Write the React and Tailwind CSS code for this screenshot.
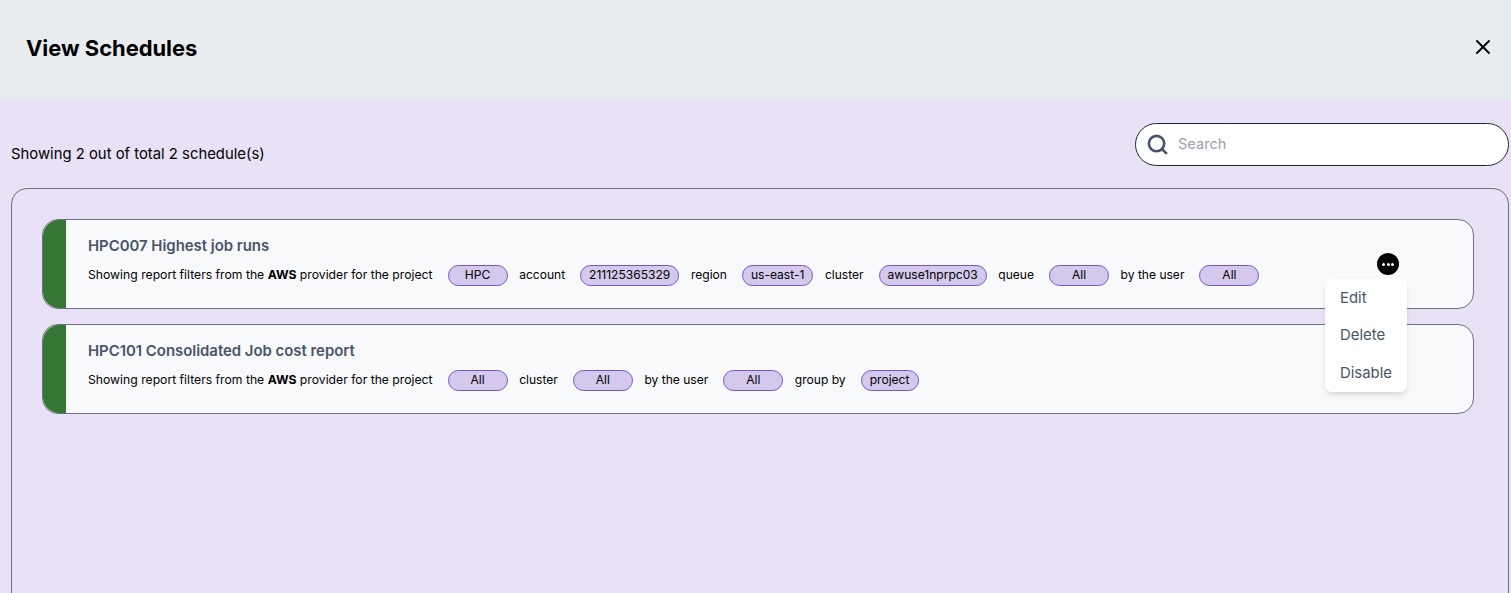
import { Search, X } from 'lucide-react'

const schedules = [
  {
    id: 'a',
    title: 'HPC007 Highest job runs',
    parts: [
      ['HPC', 'account'],
      ['211125365329', 'region'],
      ['us-east-1', 'cluster'],
      ['awuse1nprpc03', 'queue'],
      ['All', 'by the user'],
      ['All', ''],
    ],
  },
  {
    id: 'b',
    title: 'HPC101 Consolidated Job cost report',
    parts: [
      ['All', 'cluster'],
      ['All', 'by the user'],
      ['All', 'group by'],
      ['project', ''],
    ],
  },
]

function Pill({ children }) {
  const size = children === 'project' ? 'w-[58px]' : 'min-w-[60px] px-2'
  return (
    <span className={`inline-flex items-center justify-center h-[21px] rounded-full border border-[#7656c6] bg-[#d4c9ec] text-black ${size}`}>
      {children}
    </span>
  )
}

function ScheduleCard({ item, menu }) {
  return (
    <div className="relative flex h-[90px] rounded-2xl border border-[#6b7280] bg-[#f8f9fb] overflow-visible">
      <div className="w-[23px] shrink-0 rounded-l-2xl bg-[#357635]" />
      <div className="pl-[22px] pt-[16px]">
        <h3 className="text-[14.9px] leading-[20px] font-semibold text-[#475569]">{item.title}</h3>
        <div className="flex items-center mt-[9px] h-[21px] text-[12.05px] text-black whitespace-nowrap">
          <span className="text-[12.2px]">
            Showing report filters from the <b className="font-bold">AWS</b> provider for the project
          </span>
          {item.parts.map(([value, label], i) => (
            <span key={i} className="flex items-center">
              <span className="ml-[15px]">
                <Pill>{value}</Pill>
              </span>
              {label && <span className="ml-[11.6px]">{label}</span>}
            </span>
          ))}
        </div>
      </div>
      {menu && (
        <>
          <button className="absolute right-[74px] top-[33px] flex items-center justify-center gap-[1.5px] w-[22px] h-[22px] rounded-full bg-black">
            <span className="w-[3px] h-[3px] rounded-full bg-white" />
            <span className="w-[3px] h-[3px] rounded-full bg-white" />
            <span className="w-[3px] h-[3px] rounded-full bg-white" />
          </button>
          <div className="absolute z-10 left-[1282px] top-[59px] w-[82px] h-[113px] rounded-md bg-white shadow-md text-[14.9px] text-[#475569] pl-[15px] pt-[9px]">
            <div className="h-[37px] leading-[20px]">Edit</div>
            <div className="h-[38px] leading-[20px]">Delete</div>
            <div className="leading-[20px]">Disable</div>
          </div>
        </>
      )}
    </div>
  )
}

export default function App() {
  return (
    <div className="h-[593px] overflow-hidden bg-[#e9e1f5] font-['Inter',sans-serif]">
      <header className="flex items-center justify-between h-[99px] pl-[26px] pr-[16px] pb-[2px] bg-[#e9ecef]">
        <h1 className="text-[21.9px] font-bold text-black">View Schedules</h1>
        <X className="w-6 h-6 mb-[4px] text-black" strokeWidth={2} />
      </header>

      <div className="pl-[11px] pr-[2px]">
        <div className="flex items-end justify-between pt-[24px]">
          <p className="text-[14.85px] leading-[20px] mb-[2px] text-black">Showing 2 out of total 2 schedule(s)</p>
          <div className="flex items-center w-[374px] h-[43px] rounded-full border border-[#1f2937] bg-white pl-[10px]">
            <Search className="w-[23px] h-[23px] text-[#475569]" strokeWidth={2.75} />
            <span className="ml-[9px] text-[14.6px] text-[#9ca3af]">Search</span>
          </div>
        </div>
        <div className="mt-[22px] h-[500px] rounded-2xl border border-[#6b7280] pt-[30px] pl-[30px] pr-[34px]">
          <div className="flex flex-col gap-[15px]">
            <ScheduleCard item={schedules[0]} menu />
            <ScheduleCard item={schedules[1]} />
          </div>
        </div>
      </div>
    </div>
  )
}
